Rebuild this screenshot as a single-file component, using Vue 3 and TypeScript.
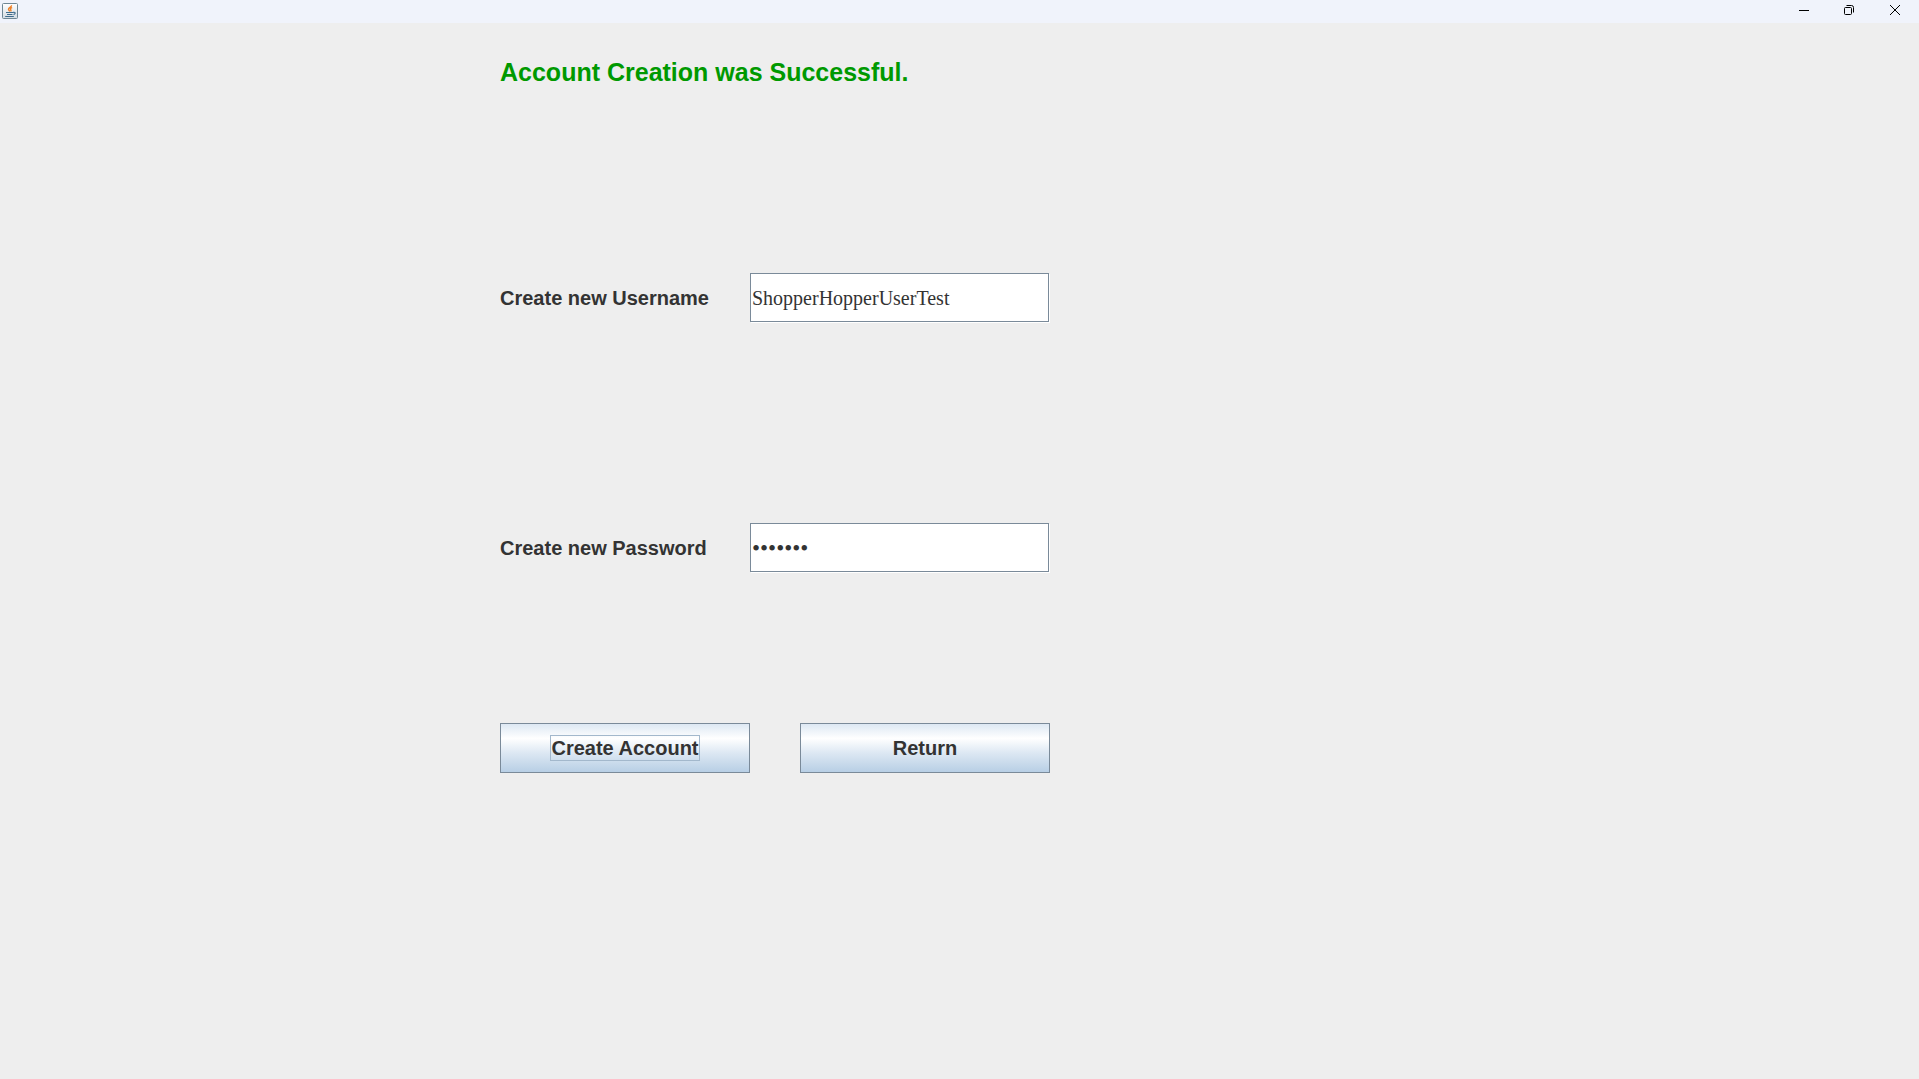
<script setup lang="ts">
import { ref } from 'vue'

const username = ref<string>('ShopperHopperUserTest')
const password = ref<string>('shopper')
const message = ref<string>('Account Creation was Successful.')
</script>

<template>
  <div class="window">
    <header class="titlebar">
      <svg class="app-icon" width="16" height="16" viewBox="0 0 16 16" aria-hidden="true">
        <defs>
          <linearGradient id="tile" x1="0" y1="0" x2="0" y2="1">
            <stop offset="0" stop-color="#ffffff" />
            <stop offset="1" stop-color="#d3dbe2" />
          </linearGradient>
        </defs>
        <rect x="0.5" y="0.5" width="15" height="15" rx="1" fill="url(#tile)" stroke="#6f8794" />
        <path d="M9.5 2.3C10 4.2 6.3 4.6 6.5 6.3C6.6 7.2 7.5 7.4 7.7 8.5M10.2 4.7C8.2 5.3 8.1 6 8.8 6.8C9.3 7.5 8.9 8 8.6 8.4" fill="none" stroke="#ee8128" stroke-width="1.4" />
        <path d="M4 9.5H11.2M5 11.5H10.5M3.2 13.5H11.8M11.2 9.4C14 8.8 13.7 11.1 11.5 11.6" fill="none" stroke="#3f6c8c" stroke-width="1.1" />
      </svg>
      <div class="controls">
        <button type="button" class="control" aria-label="Minimize">
          <svg width="12" height="12" viewBox="0 0 12 12"><path d="M2 6.5H12" stroke="#000" fill="none" /></svg>
        </button>
        <button type="button" class="control" aria-label="Restore">
          <svg width="12" height="12" viewBox="0 0 12 12" fill="none" stroke="#000">
            <rect x="1.5" y="3.5" width="7" height="7" rx="1" />
            <path d="M3.5 1.5H8.5Q10.5 1.5 10.5 3.5V8.5" />
          </svg>
        </button>
        <button type="button" class="control" aria-label="Close">
          <svg width="12" height="12" viewBox="0 0 12 12"><path d="M1 1L11 11M11 1L1 11" stroke="#000" fill="none" /></svg>
        </button>
      </div>
    </header>

    <form class="form" @submit.prevent>
      <h1 class="message">{{ message }}</h1>
      <div class="row username">
        <label for="username">Create new Username</label>
        <input id="username" v-model="username" type="text" autocomplete="off" spellcheck="false" />
      </div>
      <div class="row password">
        <label for="password">Create new Password</label>
        <input id="password" v-model="password" type="password" autocomplete="off" />
      </div>
      <div class="actions">
        <button type="submit" class="button"><span class="focus">Create Account</span></button>
        <button type="button" class="button">Return</button>
      </div>
    </form>
  </div>
</template>

<style>
body {
  background: #eeeeee;
}
</style>

<style scoped>
.window {
  min-height: 100vh;
  background: #eeeeee;
  color: #333333;
  font-family: "Liberation Sans", Arial, sans-serif;
}

.titlebar {
  display: flex;
  justify-content: space-between;
  height: 23px;
  background: #f0f3fb;
}

.app-icon {
  margin: 3px 2px;
}

.controls {
  display: flex;
  padding-right: 1px;
}

.control {
  display: flex;
  align-items: center;
  justify-content: center;
  width: 46px;
  height: 20px;
  padding: 0;
  border: 0;
  background: none;
}

.form {
  padding: 24px 24px 24px 500px;
}

.message {
  margin: 0;
  color: #009900;
  font-size: 25px;
  line-height: 50px;
}

.row {
  display: flex;
}

.username {
  margin-top: 176px;
}

.password {
  margin-top: 200px;
}

.row label {
  width: 250px;
  font-size: 20px;
  font-weight: bold;
  line-height: 50px;
}

.row input {
  box-sizing: border-box;
  width: 299px;
  height: 49px;
  margin: 0 1px 1px 0;
  padding: 2px 1px 0;
  border: 1px solid #7a8a99;
  border-radius: 0;
  outline: 0;
  background: #ffffff;
  box-shadow: 1px 1px 0 #ffffff;
  color: #333333;
  font-family: "Liberation Serif", "Times New Roman", serif;
  font-size: 20px;
}

.row input[type="password"] {
  font-size: 23px;
}

.actions {
  display: flex;
  gap: 50px;
  margin-top: 150px;
}

.button {
  display: flex;
  align-items: center;
  justify-content: center;
  width: 250px;
  height: 50px;
  padding: 0;
  border: 1px solid #7a8a99;
  background: linear-gradient(#dde8f3, #ffffff 30%, #dde8f3 60%, #b8cfe5);
  color: #333333;
  font-family: inherit;
  font-size: 20px;
  font-weight: bold;
  line-height: 24px;
}

.focus {
  outline: 1px solid #a3b8cc;
}
</style>
